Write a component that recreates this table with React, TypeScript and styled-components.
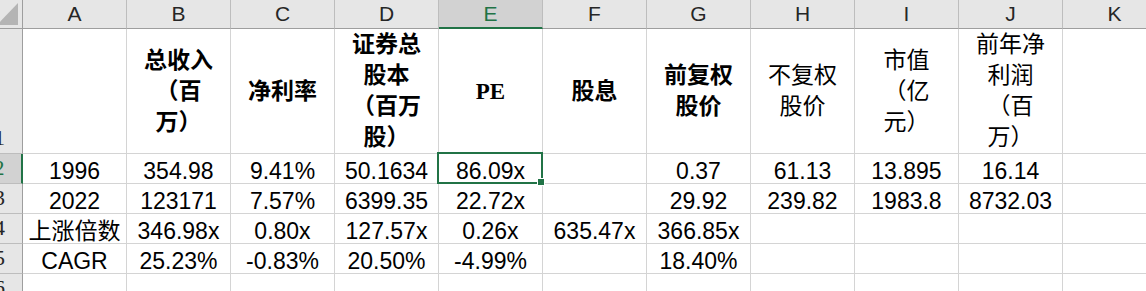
import React from "react";
import styled, { createGlobalStyle } from "styled-components";

const GREEN = "#217346";
const GRID_LINE = "#d4d4d4";

const GlobalStyle = createGlobalStyle`
  html, body {
    margin: 0;
    padding: 0;
    background: #ffffff;
    overflow: hidden;
  }
`;

const Viewport = styled.div`
  width: 1146px;
  height: 291px;
  overflow: hidden;
  background: #ffffff;
`;

// the row-number column is scrolled partly out of view on the left
const Grid = styled.div`
  display: grid;
  grid-template-columns: 43px repeat(11, 104px);
  grid-template-rows: 29px 125px repeat(5, 30px);
  margin-left: -20px;
`;

const Corner = styled.div`
  box-sizing: border-box;
  background: #e6e6e6;
  border-right: 1px solid #9e9e9e;
  border-bottom: 1px solid #9e9e9e;
  display: flex;
  align-items: flex-end;
  justify-content: flex-end;
  padding: 0 4px 3px 0;
`;

const ColHead = styled.div<{ $active?: boolean }>`
  box-sizing: border-box;
  display: flex;
  align-items: center;
  justify-content: center;
  background: ${(p) => (p.$active ? "#d2d2d2" : "#e6e6e6")};
  border-right: 1px solid #bdbdbd;
  border-bottom: ${(p) => (p.$active ? `2px solid ${GREEN}` : "1px solid #9e9e9e")};
  color: ${(p) => (p.$active ? GREEN : "#262626")};
  font-family: "Liberation Sans", Arial, sans-serif;
  font-size: 21px;
`;

const RowHead = styled.div<{ $active?: boolean }>`
  box-sizing: border-box;
  background: ${(p) => (p.$active ? "#d2d2d2" : "#e6e6e6")};
  border-right: ${(p) => (p.$active ? `2px solid ${GREEN}` : "1px solid #9e9e9e")};
  border-bottom: 1px solid #bdbdbd;
  color: ${(p) => (p.$active ? GREEN : "#262626")};
  font-family: "Liberation Serif", serif;
  font-size: 22px;
  display: flex;
  align-items: flex-end;
  justify-content: center;
  padding: 0 3px 4px 0;
  line-height: 22px;
`;

const Cell = styled.div<{ $selected?: boolean }>`
  position: relative;
  box-sizing: border-box;
  border-right: 1px solid ${GRID_LINE};
  border-bottom: 1px solid ${GRID_LINE};
  color: #000000;
  text-align: center;
  white-space: nowrap;

  ${(p) =>
    p.$selected &&
    `
    &::after {
      content: "";
      position: absolute;
      left: -2px;
      top: -2px;
      right: -1px;
      bottom: -1px;
      border: 2px solid ${GREEN};
      z-index: 2;
    }
    &::before {
      content: "";
      position: absolute;
      right: -3px;
      bottom: -3px;
      width: 6px;
      height: 6px;
      background: ${GREEN};
      border: 1px solid #ffffff;
      z-index: 3;
    }
  `}
`;

const HeadCell = styled(Cell)<{ $bold?: boolean }>`
  display: flex;
  align-items: center;
  justify-content: center;
  font-family: ${(p) =>
    p.$bold
      ? `"Liberation Serif", "Noto Sans CJK SC", serif`
      : `"Liberation Sans", "Noto Sans CJK SC", sans-serif`};
  font-weight: ${(p) => (p.$bold ? 700 : 400)};
  font-size: 23px;
  line-height: 31px;
`;

const DataCell = styled(Cell)`
  font-family: "Liberation Sans", "Noto Sans CJK SC", sans-serif;
  font-size: 23px;
  line-height: 23px;
  padding-top: 6px;
`;

const CornerMark = () => (
  <svg width="21" height="22" viewBox="0 0 21 22">
    <polygon points="0,22 21,22 21,0" fill="#b4b4b4" />
  </svg>
);

const columns = ["A", "B", "C", "D", "E", "F", "G", "H", "I", "J", "K"];

type Header = { lines: string[]; bold?: boolean };

const headers: Header[] = [
  { lines: [] },
  { lines: ["总收入", "（百", "万）"], bold: true },
  { lines: ["净利率"], bold: true },
  { lines: ["证券总", "股本", "（百万", "股）"], bold: true },
  { lines: ["PE"], bold: true },
  { lines: ["股息"], bold: true },
  { lines: ["前复权", "股价"], bold: true },
  { lines: ["不复权", "股价"] },
  { lines: ["市值", "（亿", "元）"] },
  { lines: ["前年净", "利润", "（百", "万）"] },
  { lines: [] },
];

const rows: string[][] = [
  ["1996", "354.98", "9.41%", "50.1634", "86.09x", "", "0.37", "61.13", "13.895", "16.14", ""],
  ["2022", "123171", "7.57%", "6399.35", "22.72x", "", "29.92", "239.82", "1983.8", "8732.03", ""],
  ["上涨倍数", "346.98x", "0.80x", "127.57x", "0.26x", "635.47x", "366.85x", "", "", "", ""],
  ["CAGR", "25.23%", "-0.83%", "20.50%", "-4.99%", "", "18.40%", "", "", "", ""],
  ["", "", "", "", "", "", "", "", "", "", ""],
];

const SELECTED_ROW = 0;
const SELECTED_COL = 4;

export default function App() {
  return (
    <Viewport>
      <GlobalStyle />
      <Grid>
        <Corner>
          <CornerMark />
        </Corner>
        {columns.map((c, i) => (
          <ColHead key={c} $active={i === SELECTED_COL}>
            {c}
          </ColHead>
        ))}

        <RowHead>1</RowHead>
        {headers.map((h, i) => (
          <HeadCell key={i} $bold={h.bold}>
            <div>
              {h.lines.map((line, j) => (
                <div key={j}>{line}</div>
              ))}
            </div>
          </HeadCell>
        ))}

        {rows.map((row, r) => (
          <React.Fragment key={r}>
            <RowHead $active={r === SELECTED_ROW}>{r + 2}</RowHead>
            {row.map((v, c) => (
              <DataCell key={c} $selected={r === SELECTED_ROW && c === SELECTED_COL}>
                {v}
              </DataCell>
            ))}
          </React.Fragment>
        ))}
      </Grid>
    </Viewport>
  );
}
